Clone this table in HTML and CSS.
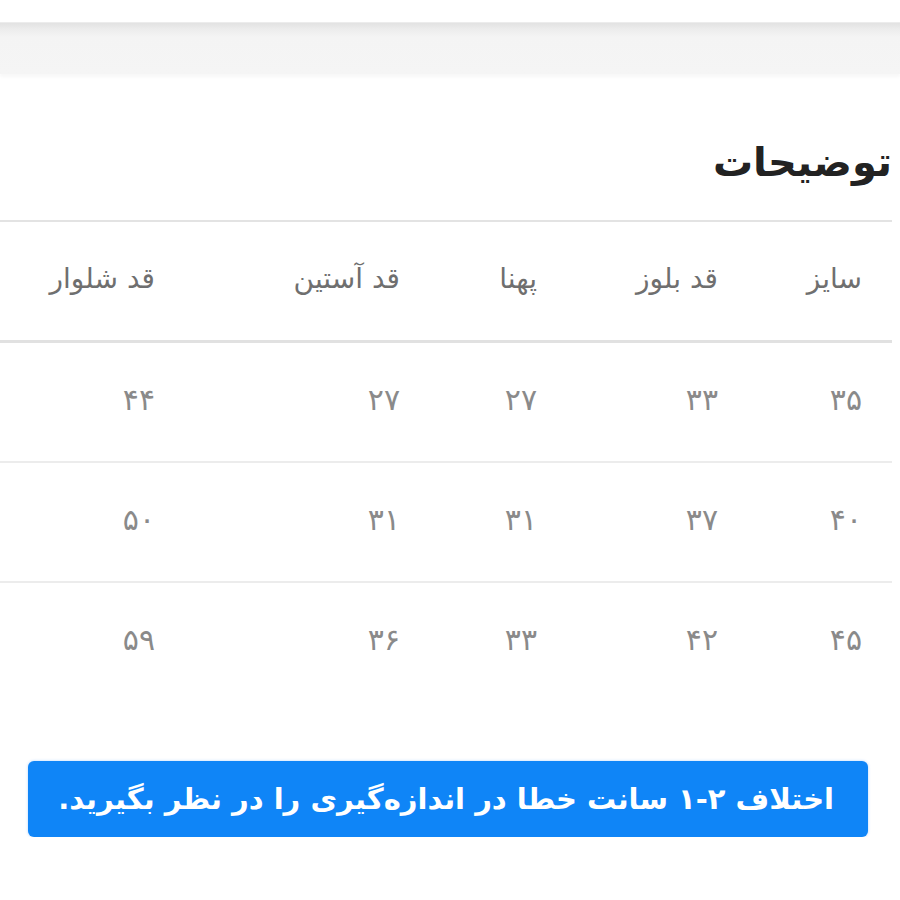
FILE: index.html
```html
<!DOCTYPE html>
<html lang="fa" dir="rtl">
<head>
<meta charset="utf-8">
<link rel="stylesheet" href="styles.css">
</head>
<body>
<div class="topbar"></div>
<section class="content">
  <h2 class="title">توضیحات</h2>
  <table class="sizes">
    <thead>
      <tr><th class="c1">سایز</th><th class="c2">قد بلوز</th><th class="c3">پهنا</th><th class="c4">قد آستین</th><th class="c5">قد شلوار</th></tr>
    </thead>
    <tbody>
      <tr><td>۳۵</td><td>۳۳</td><td>۲۷</td><td>۲۷</td><td>۴۴</td></tr>
      <tr><td>۴۰</td><td>۳۷</td><td>۳۱</td><td>۳۱</td><td>۵۰</td></tr>
      <tr><td>۴۵</td><td>۴۲</td><td>۳۳</td><td>۳۶</td><td>۵۹</td></tr>
    </tbody>
  </table>
  <div class="note">اختلاف ۲-۱ سانت خطا در اندازه‌گیری را در نظر بگیرید.</div>
</section>
</body>
</html>
```

FILE: styles.css
```css
html, body {
  margin: 0;
  padding: 0;
  background: #ffffff;
}
body {
  font-family: "DejaVu Sans", "Noto Sans", sans-serif;
  direction: rtl;
  padding-top: 22px;
}
.topbar {
  height: 51px;
  background: linear-gradient(#e2e2e2 0, #ececec 6px, #f4f4f4 14px, #f5f5f5 100%);
  border-top: 1px solid #ececec;
  box-shadow: 0 3px 3px rgba(0,0,0,0.03);
}
.content {
  padding: 0 8px 0 0;
}
.title {
  margin: 60px 0 0 0;
  font-size: 40px;
  font-weight: 600;
  color: #222;
  line-height: 56px;
  height: 86px;
}
.sizes {
  width: 100%;
  border-collapse: collapse;
  border-top: 2px solid #e3e3e3;
}
.sizes th, .sizes td {
  padding: 0 30px 0 0;
  text-align: right;
  vertical-align: middle;
  font-weight: normal;
}
.sizes th {
  height: 113px;
  font-size: 28px;
  color: #6f6f6f;
  border-bottom: 3px solid #e1e1e1;
  padding-bottom: 5px;
}
.sizes td {
  height: 112px;
  font-size: 30px;
  color: #8a8a8a;
  border-bottom: 2px solid #ececec;
  padding-bottom: 6px;
}
.sizes tbody tr:last-child td {
  border-bottom: none;
}
.c1 { width: 114px; }
.c2 { width: 151px; }
.c3 { width: 107px; }
.c4 { width: 215px; }
.note {
  margin: 60px 24px 0 28px;
  background: #0f85f7;
  color: #fff;
  border-radius: 6px;
  height: 76px;
  line-height: 76px;
  padding: 0 34px 0 0;
  font-size: 29px;
  font-weight: 600;
  box-shadow: 0 0 3px rgba(0,120,255,0.3);
  white-space: nowrap;
}
```
